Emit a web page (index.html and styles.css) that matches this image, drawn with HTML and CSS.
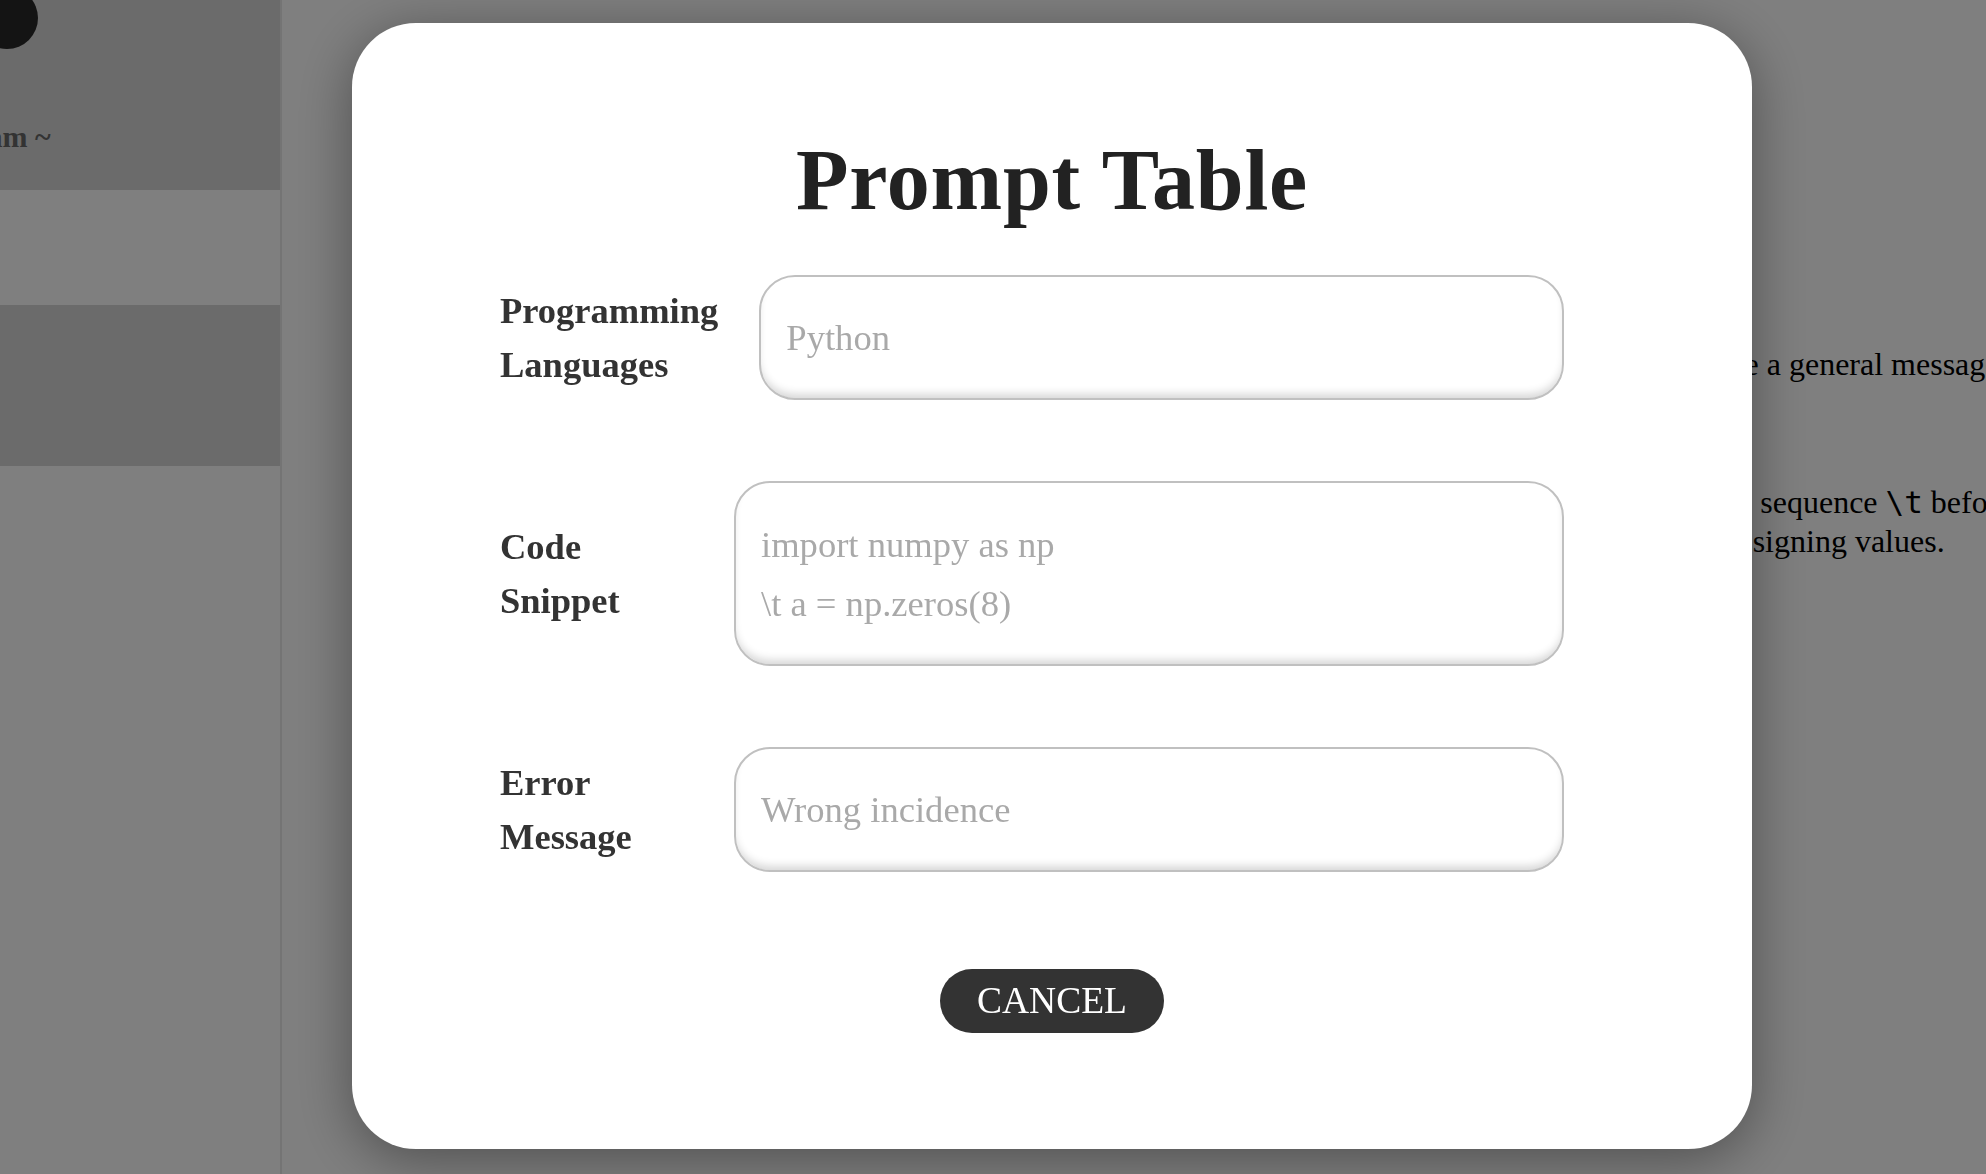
FILE: index.html
```html
<!DOCTYPE html>
<html lang="en">
<head>
<meta charset="utf-8">
<title>Prompt Table</title>
<link rel="stylesheet" href="styles.css">
</head>
<body>
<div class="page">
  <aside class="sidebar">
    <div class="sb-head">
      <span class="avatar"></span>
      <div class="sb-title">Program ~</div>
    </div>
    <div class="sb-item"></div>
    <div class="sb-item active"></div>
    <div class="sb-rest"></div>
  </aside>
  <main class="content">
    <p class="line l1">provide a general message for the user.</p>
    <p class="line l2">escape sequence <code>\t</code> before</p>
    <p class="line l3">assigning values.</p>
  </main>
</div>
<div class="overlay">
  <div class="modal">
    <h1 class="title">Prompt Table</h1>
    <div class="form">
      <div class="row">
        <div class="label">Programming Languages</div>
        <div class="field"><span class="ph">Python</span></div>
      </div>
      <div class="row">
        <div class="label">Code Snippet</div>
        <div class="field multi">
          <span class="ph">import numpy as np</span>
          <span class="ph">\t a = np.zeros(8)</span>
        </div>
      </div>
      <div class="row">
        <div class="label">Error Message</div>
        <div class="field"><span class="ph">Wrong incidence</span></div>
      </div>
    </div>
    <div class="actions">
      <button class="cancel" type="button">CANCEL</button>
    </div>
  </div>
</div>
</body>
</html>
```
FILE: styles.css
```css
html, body {
  margin: 0;
  padding: 0;
  width: 100%;
  height: 100%;
  overflow: hidden;
}
body {
  font-family: "Liberation Serif", "Times New Roman", serif;
  background: #ffffff;
  color: #000;
}

.page {
  display: flex;
  height: 100vh;
}

/* ---------- sidebar (behind overlay) ---------- */
.sidebar {
  width: 280px;
  flex: none;
  display: flex;
  flex-direction: column;
  border-right: 2px solid #e8e8e8;
  background: #ffffff;
}
.sb-head {
  position: relative;
  height: 190px;
  box-sizing: border-box;
  padding-top: 119px;
  background: #d6d6d6;
  overflow: hidden;
}
.avatar {
  position: absolute;
  left: -24px;
  top: -13px;
  width: 62px;
  height: 62px;
  border-radius: 50%;
  background: #282828;
}
.sb-title {
  margin-left: -87px;
  white-space: nowrap;
  font-size: 30px;
  line-height: 36px;
  font-weight: bold;
  color: #666666;
}
.sb-item {
  height: 115px;
  background: #ffffff;
}
.sb-item.active {
  height: 161px;
  background: #d6d6d6;
}
.sb-rest {
  flex: 1;
  background: #ffffff;
}

/* ---------- main content (behind overlay) ---------- */
.content {
  flex: 1;
  min-width: 0;
  overflow: hidden;
  padding: 345px 0 0 1478px;
  box-sizing: border-box;
}
.line {
  margin: 0;
  font-size: 32px;
  line-height: 39px;
  white-space: nowrap;
  color: #000;
}
.l1 { text-indent: -99px; }
.l2 { text-indent: -93px; margin-top: 99px; }
.l3 { text-indent: -34px; }
.line code {
  font-family: "DejaVu Sans Mono", "Liberation Mono", monospace;
  font-size: 31px;
}

/* ---------- overlay + modal ---------- */
.overlay {
  position: fixed;
  inset: 0;
  background: rgba(0, 0, 0, 0.5);
  display: flex;
  align-items: flex-start;
  padding: 23px 0 0 352px;
}
.modal {
  width: 1400px;
  height: 1126px;
  box-sizing: border-box;
  flex: none;
  background: #ffffff;
  border-radius: 64px;
  box-shadow: 0 10px 55px rgba(0, 0, 0, 0.38);
  padding-top: 115px;
  display: flex;
  flex-direction: column;
}
.title {
  margin: 0;
  text-align: center;
  font-size: 86px;
  line-height: 85px;
  font-weight: 900;
  color: #222222;
  letter-spacing: 0.8px;
}
.form {
  margin-top: 52px;
  padding: 0 188px 0 148px;
  display: flex;
  flex-direction: column;
  gap: 81px;
}
.row {
  display: flex;
  align-items: center;
}
.label {
  flex: none;
  width: min-content;
  min-width: 193px;
  padding-right: 41px;
  font-size: 36.5px;
  line-height: 54px;
  font-weight: bold;
  color: #333333;
}
.field {
  flex: 1;
  height: 125px;
  box-sizing: border-box;
  border: 2px solid #c0c0c0;
  border-radius: 36px;
  background: #ffffff;
  box-shadow: inset 0 -7px 9px -3px rgba(0, 0, 0, 0.16);
  padding: 0 25px;
  display: flex;
  flex-direction: column;
  justify-content: center;
}
.field.multi {
  height: 185px;
  justify-content: flex-start;
  padding-top: 32px;
}
.ph {
  font-size: 36.6px;
  line-height: 59px;
  color: #a9a9a9;
  white-space: pre;
}
.actions {
  margin-top: 97px;
  display: flex;
  justify-content: center;
}
.cancel {
  height: 64px;
  padding: 0 37px;
  border: none;
  border-radius: 32px;
  background: #333333;
  color: #ffffff;
  font-family: "Liberation Serif", "Times New Roman", serif;
  font-size: 37.5px;
  line-height: 64px;
}
```
